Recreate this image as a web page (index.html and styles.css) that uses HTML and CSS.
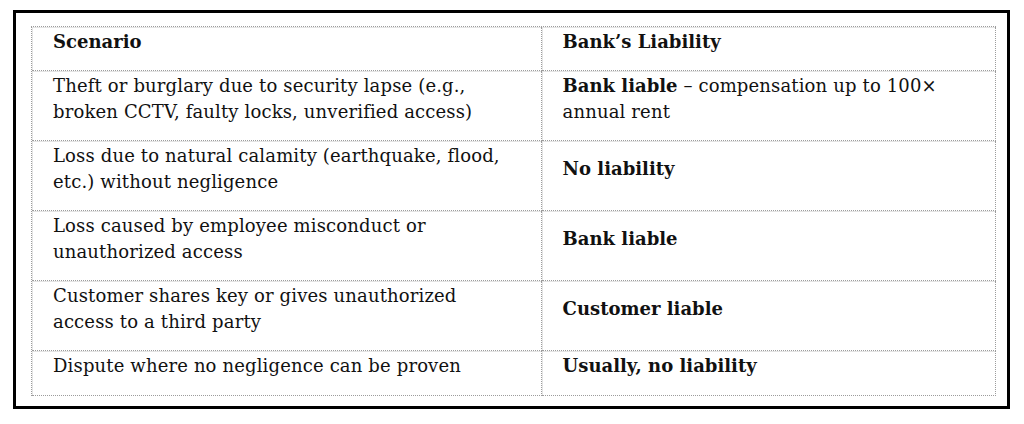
FILE: index.html
```html
<!DOCTYPE html>
<html>
<head>
<meta charset="utf-8">
<link rel="stylesheet" href="styles.css">
</head>
<body>
<div class="frame">
  <table class="liab">
    <colgroup><col class="c1"><col class="c2"></colgroup>
    <tr class="head">
      <td><b>Scenario</b></td>
      <td><b>Bank’s Liability</b></td>
    </tr>
    <tr>
      <td>Theft or burglary due to security lapse (e.g.,<br>broken CCTV, faulty locks, unverified access)</td>
      <td class="top"><b>Bank liable</b> – compensation up to 100×<br>annual rent</td>
    </tr>
    <tr>
      <td>Loss due to natural calamity (earthquake, flood,<br>etc.) without negligence</td>
      <td><b>No liability</b></td>
    </tr>
    <tr>
      <td>Loss caused by employee misconduct or<br>unauthorized access</td>
      <td><b>Bank liable</b></td>
    </tr>
    <tr>
      <td>Customer shares key or gives unauthorized<br>access to a third party</td>
      <td><b>Customer liable</b></td>
    </tr>
    <tr class="last">
      <td>Dispute where no negligence can be proven</td>
      <td><b>Usually, no liability</b></td>
    </tr>
  </table>
</div>
</body>
</html>
```
FILE: styles.css
```css
html, body {
  margin: 0;
  padding: 0;
  background: #ffffff;
}
body {
  padding: 10px 0 0 13px;
}
.frame {
  border: 3px solid #000;
  padding: 13px 11px 0 15px;
  box-sizing: border-box;
  width: 997px;
  height: 399px;
}
.liab {
  width: 965px;
  border-collapse: separate;
  border-spacing: 0;
  border-top: 1px dotted #9c9c9c;
  border-left: 1px dotted #9c9c9c;
  font-family: "DejaVu Serif", "Liberation Serif", serif;
  font-size: 18px;
  letter-spacing: 0.15px;
  line-height: 26px;
  color: #111111;
}
.c1 { width: 510px; }
.c2 { width: 455px; }
.liab td {
  border-right: 1px dotted #9c9c9c;
  border-bottom: 1px dotted #9c9c9c;
  box-shadow: inset 1px 1px 0 #e4e4e4;
  padding: 2px 10px 15px 21px;
  vertical-align: middle;
  height: 52px;
  white-space: nowrap;
}
.liab td.top { vertical-align: top; }
.liab tr.head td { height: 26px; }
.liab tr.last td { height: 26px; padding-bottom: 16px; }
.liab tr td:first-child { vertical-align: top; }
.liab b { font-weight: bold; letter-spacing: 0; }
```
